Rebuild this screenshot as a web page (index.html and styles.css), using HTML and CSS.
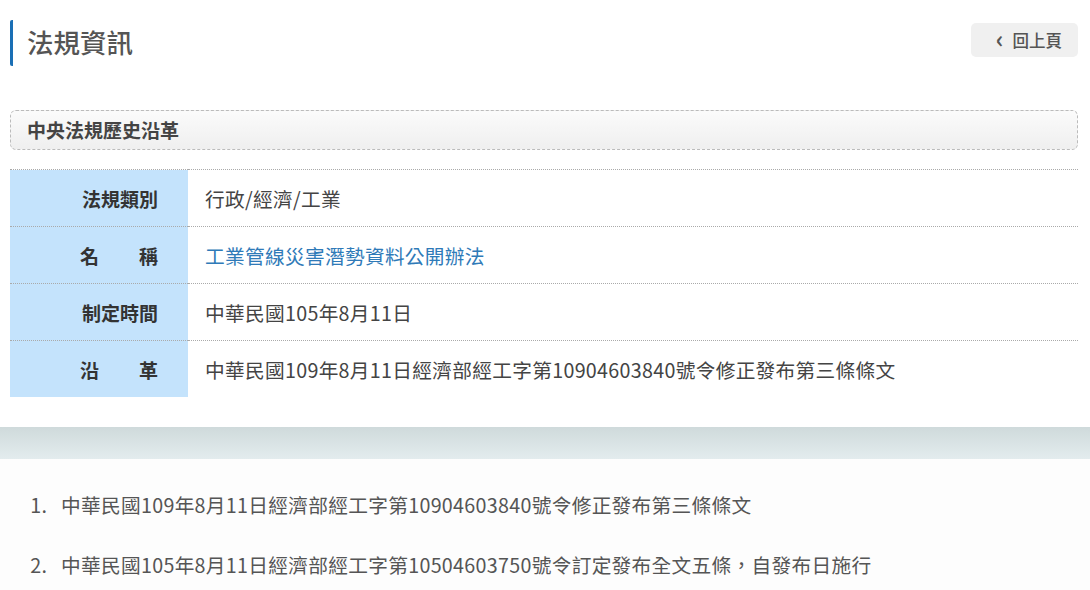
FILE: index.html
```html
<!DOCTYPE html>
<html lang="zh-Hant">
<head>
    <meta charset="UTF-8">
    <meta name="viewport" content="width=device-width, initial-scale=1.0">
    <title>法規資訊</title>
    <link rel="stylesheet" href="styles.css">
</head>
<body>
    <div class="page">
        <div class="top">
            <h2 class="title">法規資訊</h2>
            <a class="back" href="#"><span class="arrow">&lsaquo;</span>回上頁</a>
        </div>

        <div class="box-head">中央法規歷史沿革</div>

        <table class="info">
            <tr>
                <th>法規類別</th>
                <td>行政/經濟/工業</td>
            </tr>
            <tr>
                <th><span class="spread"><span>名</span><span>稱</span></span></th>
                <td><a href="#">工業管線災害潛勢資料公開辦法</a></td>
            </tr>
            <tr>
                <th>制定時間</th>
                <td>中華民國105年8月11日</td>
            </tr>
            <tr>
                <th><span class="spread"><span>沿</span><span>革</span></span></th>
                <td>中華民國109年8月11日經濟部經工字第10904603840號令修正發布第三條條文</td>
            </tr>
        </table>
    </div>

    <div class="band"></div>

    <ol class="history">
        <li>中華民國109年8月11日經濟部經工字第10904603840號令修正發布第三條條文</li>
        <li>中華民國105年8月11日經濟部經工字第10504603750號令訂定發布全文五條，自發布日施行</li>
    </ol>
</body>
</html>
```

FILE: styles.css
```css
body {
    margin: 0;
    font-family: "Noto Sans CJK TC", "Open Sans", sans-serif;
    color: #444;
    background: #fdfdfd;
}

.page {
    background: #fff;
    padding: 20px 12px 30px 10px;
}

.top {
    display: flex;
    justify-content: space-between;
    align-items: center;
}

.title {
    margin: 0;
    border-left: 3px solid #1a6fb5;
    border-radius: 2px;
    padding: 2px 0 4px 14px;
    font-size: 26.5px;
    font-weight: 500;
    line-height: 40px;
    color: #555;
}

.back {
    display: flex;
    align-items: center;
    gap: 9px;
    background: #f0f0f0;
    border-radius: 5px;
    padding: 0 16px 0 25px;
    height: 34px;
    margin-top: -6px;
    font-size: 16.5px;
    font-weight: 500;
    color: #555;
    text-decoration: none;
}

.arrow {
    font-size: 24px;
    font-weight: 700;
    line-height: 1;
    margin-top: -4px;
}

.box-head {
    margin-top: 44px;
    border: 1px dashed #bbb;
    border-radius: 6px;
    background: linear-gradient(#fbfbfb, #efefef);
    padding: 0 16px;
    height: 38px;
    line-height: 38px;
    font-size: 19px;
    font-weight: 700;
    color: #444;
}

.info {
    width: 100%;
    margin-top: 19px;
    border-collapse: collapse;
    font-size: 19.7px;
}

.info th,
.info td {
    border-top: 1px dotted #aaa;
    height: 56px;
    padding: 0;
}

.info th {
    width: 178px;
    background: #c4e3fc;
    text-align: right;
    padding-right: 30px;
    box-sizing: border-box;
    font-weight: 700;
    color: #333;
    font-size: 19px;
}

.info td {
    padding-left: 17px;
    color: #444;
    letter-spacing: 0.3px;
}

.info a {
    color: #2f7ab8;
    text-decoration: none;
}

.spread {
    display: inline-flex;
    justify-content: space-between;
    width: 78px;
}

.band {
    height: 32px;
    background: linear-gradient(#cfdadb, #e3ecee);
}

.history {
    margin: 0;
    padding: 31px 0 0 52px;
    font-size: 19.7px;
    color: #555;
    letter-spacing: 0.3px;
}

.history li {
    line-height: 30px;
    margin-bottom: 30px;
    padding-left: 9px;
}
```
